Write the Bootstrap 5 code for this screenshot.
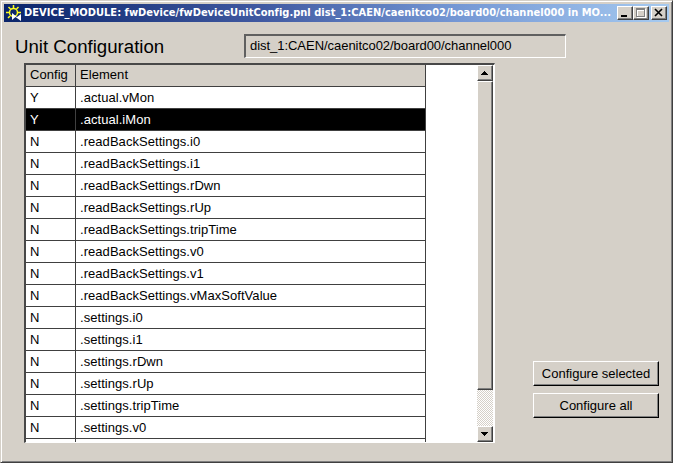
<!DOCTYPE html>
<html lang="en">
<head>
<meta charset="utf-8">
<title>Unit Configuration</title>
<link href="https://cdn.jsdelivr.net/npm/bootstrap@5.3.0/dist/css/bootstrap.min.css" rel="stylesheet">
<style>
body{font:13px/16px "Liberation Sans",Arial,sans-serif;color:#000;background:#d5d0c8;width:673px;height:463px;overflow:hidden}
.win{width:673px;height:463px;border:1px solid #d5d0c8;border-right-color:#404040;border-bottom-color:#404040;box-shadow:inset 1px 1px #fff,inset -1px -1px #808080;padding:3px 3px 0}
.titlebar{height:18px;background:linear-gradient(90deg,#0a246a,#3f58a0 38%,#7497d4 68%,#a6caf0);color:#fff;font:bold 11px/18px "DejaVu Sans Condensed","DejaVu Sans",sans-serif;font-stretch:condensed;padding:0 2px}
.caption-text{letter-spacing:.02px;margin-left:2px;white-space:nowrap}
.raised{background:#d5d0c8;border:1px solid #fff;border-right-color:#404040;border-bottom-color:#404040;box-shadow:inset -1px -1px #808080}
.cap-btn{width:16px;height:14px;padding:0}
.cap-btn svg,.scroll-btn svg{display:block}
.heading{font-size:18.65px;line-height:22px;width:240px;padding:14px 0 0 11px}
.path-field{width:322px;height:24px;margin-top:12px;border:1px solid #fff;border-top:2px solid #606060;border-left:2px solid #606060;padding:1px 0 0 4px;line-height:17px;letter-spacing:-.04px}
.grid-frame{width:471px;height:380px;margin:5px 0 0 20px;border:2px solid #484848;border-right:1px solid #fff;border-bottom:1px solid #fff;background:#fff}
.grid-view{width:451px;overflow:hidden}
.grid{width:400px;table-layout:fixed;border-collapse:separate;border-spacing:0}
.grid th,.grid td{height:22px;padding:0 0 1px 4px;font-weight:400;line-height:18px;border-right:1px solid #404040;border-bottom:1px solid #404040;white-space:nowrap;letter-spacing:.05px}
.grid td{padding:1px 0 0 4px}
.grid th:first-child,.grid td:first-child{width:50px}
.grid th{background:#d5d0c8}
.grid .picked td{background:#000;color:#fff}
.scroller{width:16px;background:repeating-conic-gradient(#fff 0 25%,#d5d0c8 0 50%) 0 0/2px 2px}
.scroll-btn{width:16px;height:16px;padding:0}
.thumb{height:309px}
.actions{width:126px;margin:303px 10px 0 auto;gap:7px}
.push{height:25px;border-radius:0;padding:0;font-size:13px;line-height:22px;color:#000;border-right-color:#000;border-bottom-color:#000}
</style>
<script src="https://cdn.jsdelivr.net/npm/bootstrap@5.3.0/dist/js/bootstrap.bundle.min.js"></script>
</head>
<body class="m-0">
<div class="win">
  <header class="titlebar d-flex align-items-center">
    <svg width="16" height="16" viewBox="0 0 16 16" class="flex-shrink-0"><g fill="none" stroke="#ffff20" stroke-width="1.5"><circle cx="7.5" cy="7.5" r="4"/><path d="M7.500 0v3M2.500 2l2 2M12.500 2l-2 2M0 7.500h3M12 7.500h3M2 13l2-2"/></g><path d="M6 8v7l3.500-3 5.500 4V9l-4 3z" fill="#fff"/></svg>
    <div class="caption-text">DEVICE_MODULE: fwDevice/fwDeviceUnitConfig.pnl dist_1:CAEN/caenitco02/board00/channel000 in MO...</div>
    <div class="d-flex ms-auto flex-shrink-0">
      <button class="cap-btn raised" aria-label="Minimize"><svg width="14" height="12" shape-rendering="crispEdges"><path d="M3 8h6v2H3z"/></svg></button>
      <button class="cap-btn raised" aria-label="Maximize"><svg width="14" height="12" shape-rendering="crispEdges"><path d="M3.500 2.500h8v8h-8zM3 3.500h9" fill="none" stroke="#fff"/><path d="M2.500 1.500h8v8h-8zM2 2.500h9" fill="none" stroke="#808080"/></svg></button>
      <button class="cap-btn raised" style="margin-left:2px" aria-label="Close"><svg width="14" height="12"><path d="M3 2l7 7M10 2l-7 7" stroke="#000" stroke-width="1.600"/></svg></button>
    </div>
  </header>
  <div class="d-flex align-items-start">
    <h1 class="heading m-0 fw-normal">Unit Configuration</h1>
    <div class="path-field">dist_1:CAEN/caenitco02/board00/channel000</div>
  </div>
  <main class="d-flex align-items-start">
    <div class="grid-frame d-flex">
      <div class="grid-view">
        <table class="grid">
          <thead><tr><th>Config</th><th>Element</th></tr></thead>
          <tbody>
            <tr><td>Y</td><td>.actual.vMon</td></tr>
            <tr class="picked"><td>Y</td><td>.actual.iMon</td></tr>
            <tr><td>N</td><td>.readBackSettings.i0</td></tr>
            <tr><td>N</td><td>.readBackSettings.i1</td></tr>
            <tr><td>N</td><td>.readBackSettings.rDwn</td></tr>
            <tr><td>N</td><td>.readBackSettings.rUp</td></tr>
            <tr><td>N</td><td>.readBackSettings.tripTime</td></tr>
            <tr><td>N</td><td>.readBackSettings.v0</td></tr>
            <tr><td>N</td><td>.readBackSettings.v1</td></tr>
            <tr><td>N</td><td>.readBackSettings.vMaxSoftValue</td></tr>
            <tr><td>N</td><td>.settings.i0</td></tr>
            <tr><td>N</td><td>.settings.i1</td></tr>
            <tr><td>N</td><td>.settings.rDwn</td></tr>
            <tr><td>N</td><td>.settings.rUp</td></tr>
            <tr><td>N</td><td>.settings.tripTime</td></tr>
            <tr><td>N</td><td>.settings.v0</td></tr>
            <tr><td></td><td></td></tr>
          </tbody>
        </table>
      </div>
      <div class="scroller d-flex flex-column">
        <button class="scroll-btn raised" aria-label="Scroll up"><svg width="14" height="14" shape-rendering="crispEdges"><path d="M6 5h1v1h1v1h1v1h1v1H3V8h1V7h1V6h1z"/></svg></button>
        <div class="thumb raised"></div>
        <button class="scroll-btn raised mt-auto" aria-label="Scroll down"><svg width="14" height="14" shape-rendering="crispEdges"><path d="M3 5h7v1H9v1H8v1H7v1H6V8H5V7H4V6H3z"/></svg></button>
      </div>
    </div>
    <div class="actions d-flex flex-column">
      <button class="push btn raised">Configure selected</button>
      <button class="push btn raised">Configure all</button>
    </div>
  </main>
</div>
</body>
</html>
